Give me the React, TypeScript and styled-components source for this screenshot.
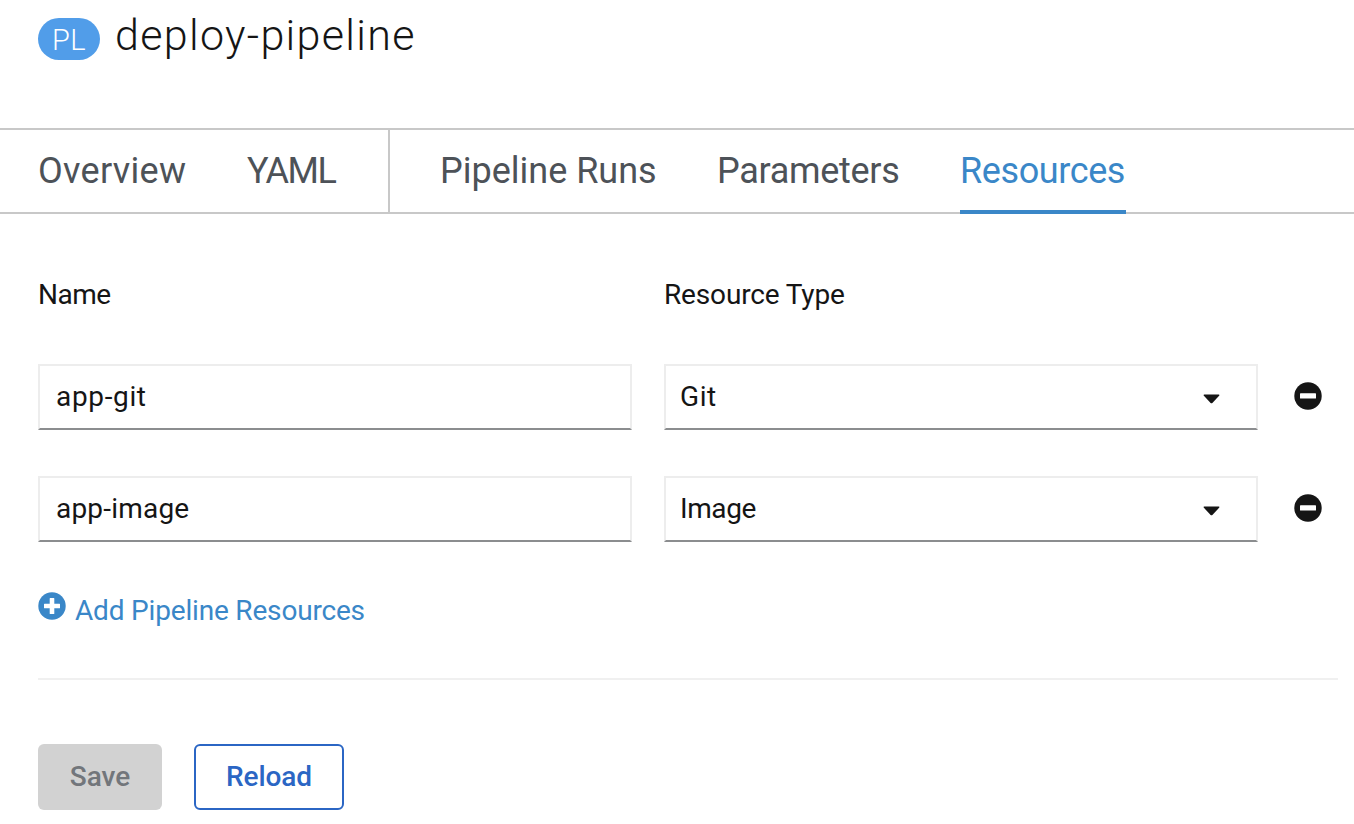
import React from "react";
import styled, { createGlobalStyle } from "styled-components";

const GlobalStyle = createGlobalStyle`
  * { box-sizing: border-box; }
  body {
    margin: 0;
    background: #fff;
    color: #151515;
    font-family: Roboto, "Liberation Sans", sans-serif;
    font-size: 28px;
    line-height: 42px;
  }
  button, input { font: inherit; color: inherit; }
`;

const Page = styled.div`
  height: 824px;
  overflow: hidden;
`;

const Header = styled.header`
  display: flex;
  align-items: flex-start;
  height: 128px;
  padding: 18px 38px 0;
`;

const Badge = styled.span`
  display: flex;
  align-items: center;
  justify-content: center;
  width: 62px;
  height: 42px;
  padding-top: 2px;
  border-radius: 21px;
  background: #519de9;
  color: #fff;
  font-size: 29px;
  font-weight: 300;
  letter-spacing: 0.5px;
`;

const Title = styled.h1<{ $track: number }>`
  margin: -9px 0 0 15px;
  font-size: 43px;
  font-weight: 300;
  line-height: 52px;
  letter-spacing: ${(p) => p.$track}px;
`;

const Tabs = styled.nav`
  display: flex;
  height: 86px;
  border-top: 2px solid #c8c8c8;
  box-shadow: inset 0 -2px 0 #c8c8c8;
`;

const TabGroup = styled.div<{ $divided?: boolean }>`
  display: flex;
  gap: 60px;
  padding: 0 52px 0 38px;
  ${(p) => p.$divided && "height: 82px; width: 390px; border-right: 2px solid #c8c8c8;"}
  ${(p) => !p.$divided && "padding-left: 50px;"}
`;

const Tab = styled.a<{ $active?: boolean; $width: number; $track: number }>`
  width: ${(p) => p.$width}px;
  flex: none;
  height: 84px;
  line-height: 82px;
  font-size: 36px;
  white-space: nowrap;
  letter-spacing: ${(p) => p.$track}px;
  color: ${(p) => (p.$active ? "#3a87c8" : "#4d5258")};
  ${(p) => p.$active && "border-bottom: 4px solid #3a87c8;"}
`;

const Form = styled.form`
  padding: 60px 16px 0 38px;
`;

const Row = styled.div<{ $heading?: boolean }>`
  display: grid;
  grid-template-columns: 594px 594px 28px;
  column-gap: 32px;
  align-items: center;
  height: ${(p) => (p.$heading ? 42 : 66)}px;
  margin-bottom: ${(p) => (p.$heading ? 48 : 46)}px;
`;

const Label = styled.span<{ $track: number }>`
  letter-spacing: ${(p) => p.$track}px;
`;

const Field = styled.input<{ $track: number }>`
  width: 100%;
  height: 66px;
  padding: 0 16px 2px;
  border: 2px solid #ededed;
  border-bottom-color: #8b8d8f;
  border-radius: 0;
  outline: none;
  background: #fff;
  letter-spacing: ${(p) => p.$track}px;
`;

const Select = styled.button<{ $track: number }>`
  display: flex;
  align-items: center;
  justify-content: space-between;
  height: 66px;
  padding: 0 36px 0 14px;
  border: 2px solid #ededed;
  border-bottom-color: #8b8d8f;
  background: #fff;
  letter-spacing: ${(p) => p.$track}px;
`;

const Caret = styled.svg`
  display: block;
  width: 17px;
  height: 10px;
  margin-top: 4px;
`;

const IconButton = styled.button`
  display: flex;
  width: 28px;
  height: 28px;
  margin: -2px 0 0 4px;
  padding: 0;
  border: 0;
  background: none;
`;

const AddLink = styled.button<{ $track: number }>`
  display: flex;
  align-items: flex-start;
  gap: 9px;
  height: 42px;
  padding: 0;
  border: 0;
  background: none;
  color: #3a87c8;
  line-height: 46px;
  letter-spacing: ${(p) => p.$track}px;
  svg { margin-top: 4px; }
`;

const Divider = styled.hr`
  height: 2px;
  margin: 48px 0 64px;
  border: 0;
  background: #f0f0f0;
`;

const Actions = styled.div`
  display: flex;
  gap: 32px;
`;

const Button = styled.button<{ $secondary?: boolean; $track: number }>`
  width: ${(p) => (p.$secondary ? 150 : 124)}px;
  height: 66px;
  padding: 0;
  border: ${(p) => (p.$secondary ? "2px solid #2b66c4" : "0")};
  border-radius: 6px;
  background: ${(p) => (p.$secondary ? "#fff" : "#d2d2d2")};
  color: ${(p) => (p.$secondary ? "#2b66c4" : "#72767b")};
  font-weight: 500;
  letter-spacing: ${(p) => p.$track}px;
`;

const CircleIcon = ({ plus }: { plus?: boolean }) => (
  <svg width="28" height="28" viewBox="0 0 28 28">
    <circle cx="14" cy="14" r="13.7" fill="currentColor" />
    {plus ? (
      <path d="M12.2 6h3.6q.5 0 .5.5v5.2h5.2q.5 0 .5.5v3.6q0 .5-.5.5h-5.2v5.2q0 .5-.5.5h-3.6q-.5 0-.5-.5v-5.2H6.5q-.5 0-.5-.5v-3.6q0-.5.5-.5h5.2V6.5q0-.5.5-.5z" fill="#fff" />
    ) : (
      <rect x="6" y="11.3" width="16" height="5.2" rx=".6" fill="#fff" />
    )}
  </svg>
);

const resources = [
  { name: "app-git", type: "Git", nameTrack: 0.65, typeTrack: 0.6 },
  { name: "app-image", type: "Image", nameTrack: 0.2, typeTrack: -0.4 },
];

export default function App() {
  return (
    <Page>
      <GlobalStyle />
      <Header>
        <Badge>PL</Badge>
        <Title $track={1.32}>deploy-pipeline</Title>
      </Header>
      <Tabs>
        <TabGroup $divided>
          <Tab $width={149} $track={0.3}>Overview</Tab>
          <Tab $width={90} $track={-1.5}>YAML</Tab>
        </TabGroup>
        <TabGroup>
          <Tab $width={217} $track={0}>Pipeline Runs</Tab>
          <Tab $width={183} $track={-0.3}>Parameters</Tab>
          <Tab $width={166} $track={-0.4} $active>Resources</Tab>
        </TabGroup>
      </Tabs>
      <Form onSubmit={(e) => e.preventDefault()}>
        <Row $heading>
          <Label $track={-0.5}>Name</Label>
          <Label $track={-0.15}>Resource Type</Label>
        </Row>
        {resources.map((r) => (
          <Row key={r.name}>
            <Field defaultValue={r.name} $track={r.nameTrack} />
            <Select type="button" $track={r.typeTrack}>
              {r.type}
              <Caret viewBox="0 0 17 10">
                <path d="M1.200.5h14.600q1.200.2.300 1.300L9.400 8.900q-.9.900-1.800 0L.9 1.800Q0 .7 1.200.5z" fill="#151515" />
              </Caret>
            </Select>
            <IconButton type="button" aria-label="Remove">
              <CircleIcon />
            </IconButton>
          </Row>
        ))}
        <AddLink type="button" $track={-0.18}>
          <CircleIcon plus />
          Add Pipeline Resources
        </AddLink>
        <Divider />
        <Actions>
          <Button type="button" disabled $track={0}>Save</Button>
          <Button type="button" $secondary $track={-0.1}>Reload</Button>
        </Actions>
      </Form>
    </Page>
  );
}
